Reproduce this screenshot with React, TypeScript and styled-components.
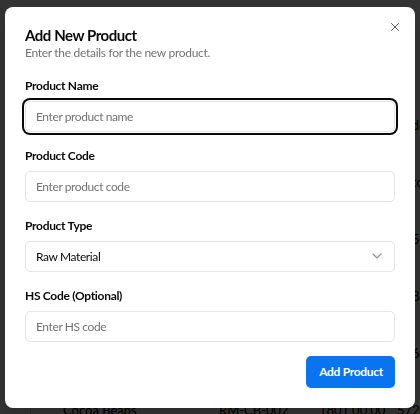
import styled, { createGlobalStyle } from "styled-components";
import { X, ChevronDown } from "lucide-react";

const GlobalStyle = createGlobalStyle`
  * {
    box-sizing: border-box;
  }
  body {
    margin: 0;
    background: #ffffff;
    font-family: Lato, "Open Sans", sans-serif;
    color: #0a0a0a;
  }
`;

const Page = styled.div`
  width: 420px;
  height: 414px;
  overflow: hidden;
  padding: 96px 0 0 30px;
`;

const Table = styled.div`
  border-left: 1px solid #d4d4d4;
  display: flex;
  flex-direction: column;
`;

const Row = styled.div`
  height: 57px;
  display: grid;
  grid-template-columns: 32px 156px 100px 78px 80px;
  align-items: center;
  font-size: 13px;
  color: #000;
  white-space: nowrap;
`;

const Cell = styled.div`
  overflow: visible;
`;

const Overlay = styled.div`
  position: fixed;
  inset: 0;
  background: rgba(0, 0, 0, 0.8);
  display: flex;
  align-items: center;
  justify-content: center;
`;

const Dialog = styled.div`
  position: relative;
  width: 410px;
  background: #ffffff;
  border-radius: 8px;
  padding: 19px 20px 20px;
  display: flex;
  flex-direction: column;
  box-shadow: 0 10px 25px rgba(0, 0, 0, 0.15);
`;

const CloseButton = styled.button`
  position: absolute;
  top: 13px;
  right: 13px;
  width: 14px;
  height: 14px;
  padding: 0;
  border: none;
  background: transparent;
  color: #0a0a0a;
  opacity: 0.7;
  display: flex;
  align-items: center;
  justify-content: center;
  cursor: pointer;
`;

const Header = styled.div`
  display: flex;
  flex-direction: column;
  gap: 1px;
`;

const Title = styled.h2`
  margin: 0;
  font-size: 15px;
  line-height: 18px;
  font-weight: 700;
  letter-spacing: -0.45px;
  color: #0a0a0a;
`;

const Description = styled.p`
  margin: 0;
  font-size: 12px;
  line-height: 16px;
  letter-spacing: -0.3px;
  color: #737373;
`;

const Form = styled.div`
  margin-top: 16px;
  display: flex;
  flex-direction: column;
  gap: 15px;
`;

const Field = styled.div`
  display: flex;
  flex-direction: column;
  gap: 7px;
`;

const Label = styled.label`
  font-size: 12px;
  line-height: 17px;
  font-weight: 700;
  letter-spacing: -0.3px;
  color: #0a0a0a;
`;

const Input = styled.input<{ $focused?: boolean }>`
  height: 31px;
  width: 100%;
  padding: 0 10px;
  border: 1px solid #e5e5e5;
  border-radius: 5px;
  font-family: inherit;
  font-size: 12px;
  letter-spacing: -0.4px;
  color: #0a0a0a;
  background: #ffffff;
  outline: none;
  box-shadow: ${(p) =>
    p.$focused ? "0 0 0 1px #ffffff, 0 0 0 3px #0a0a0a" : "none"};

  &::placeholder {
    color: #737373;
  }
`;

const SelectTrigger = styled.button`
  height: 31px;
  width: 100%;
  padding: 0 9px 0 10px;
  border: 1px solid #e5e5e5;
  border-radius: 5px;
  background: #ffffff;
  display: flex;
  align-items: center;
  justify-content: space-between;
  font-family: inherit;
  font-size: 12px;
  letter-spacing: -0.4px;
  color: #0a0a0a;
  cursor: pointer;

  svg {
    opacity: 0.45;
  }
`;

const Footer = styled.div`
  margin-top: 14px;
  display: flex;
  justify-content: flex-end;
`;

const PrimaryButton = styled.button`
  height: 32px;
  padding: 0 12px 0 13px;
  border: none;
  border-radius: 5px;
  background: #0a73f0;
  color: #ffffff;
  font-family: inherit;
  font-size: 12px;
  font-weight: 700;
  letter-spacing: -0.3px;
  cursor: pointer;
`;

const rows = [
  ["", "Sugar", "RM-SG-001", "1200,00.00", "Order"],
  ["", "Flour", "RM-FL-003", "950,00.00", "Batch"],
  ["", "Butter", "RM-BT-004", "2400,00.00", "3250,00"],
  ["", "Milk Powder", "RM-MP-005", "1650,00.00", "4180,00"],
  ["", "Vanilla", "RM-VN-006", "3100,00.00", "2960,00"],
  ["", "Cocoa Beans", "RM-CB-002", "1801,00.00", "5720,00"],
];

export default function App() {
  return (
    <>
      <GlobalStyle />
      <Page>
        <Table>
          {rows.map((r, i) => (
            <Row key={i}>
              {r.map((c, j) => (
                <Cell key={j}>{c}</Cell>
              ))}
            </Row>
          ))}
        </Table>
      </Page>
      <Overlay>
        <Dialog>
          <CloseButton aria-label="Close">
            <X size={14} strokeWidth={1.7} />
          </CloseButton>
          <Header>
            <Title>Add New Product</Title>
            <Description>Enter the details for the new product.</Description>
          </Header>
          <Form>
            <Field>
              <Label>Product Name</Label>
              <Input $focused autoFocus placeholder="Enter product name" />
            </Field>
            <Field>
              <Label>Product Code</Label>
              <Input placeholder="Enter product code" />
            </Field>
            <Field>
              <Label>Product Type</Label>
              <SelectTrigger type="button">
                <span>Raw Material</span>
                <ChevronDown size={16} strokeWidth={1.6} />
              </SelectTrigger>
            </Field>
            <Field>
              <Label>HS Code (Optional)</Label>
              <Input placeholder="Enter HS code" />
            </Field>
          </Form>
          <Footer>
            <PrimaryButton>Add Product</PrimaryButton>
          </Footer>
        </Dialog>
      </Overlay>
    </>
  );
}
